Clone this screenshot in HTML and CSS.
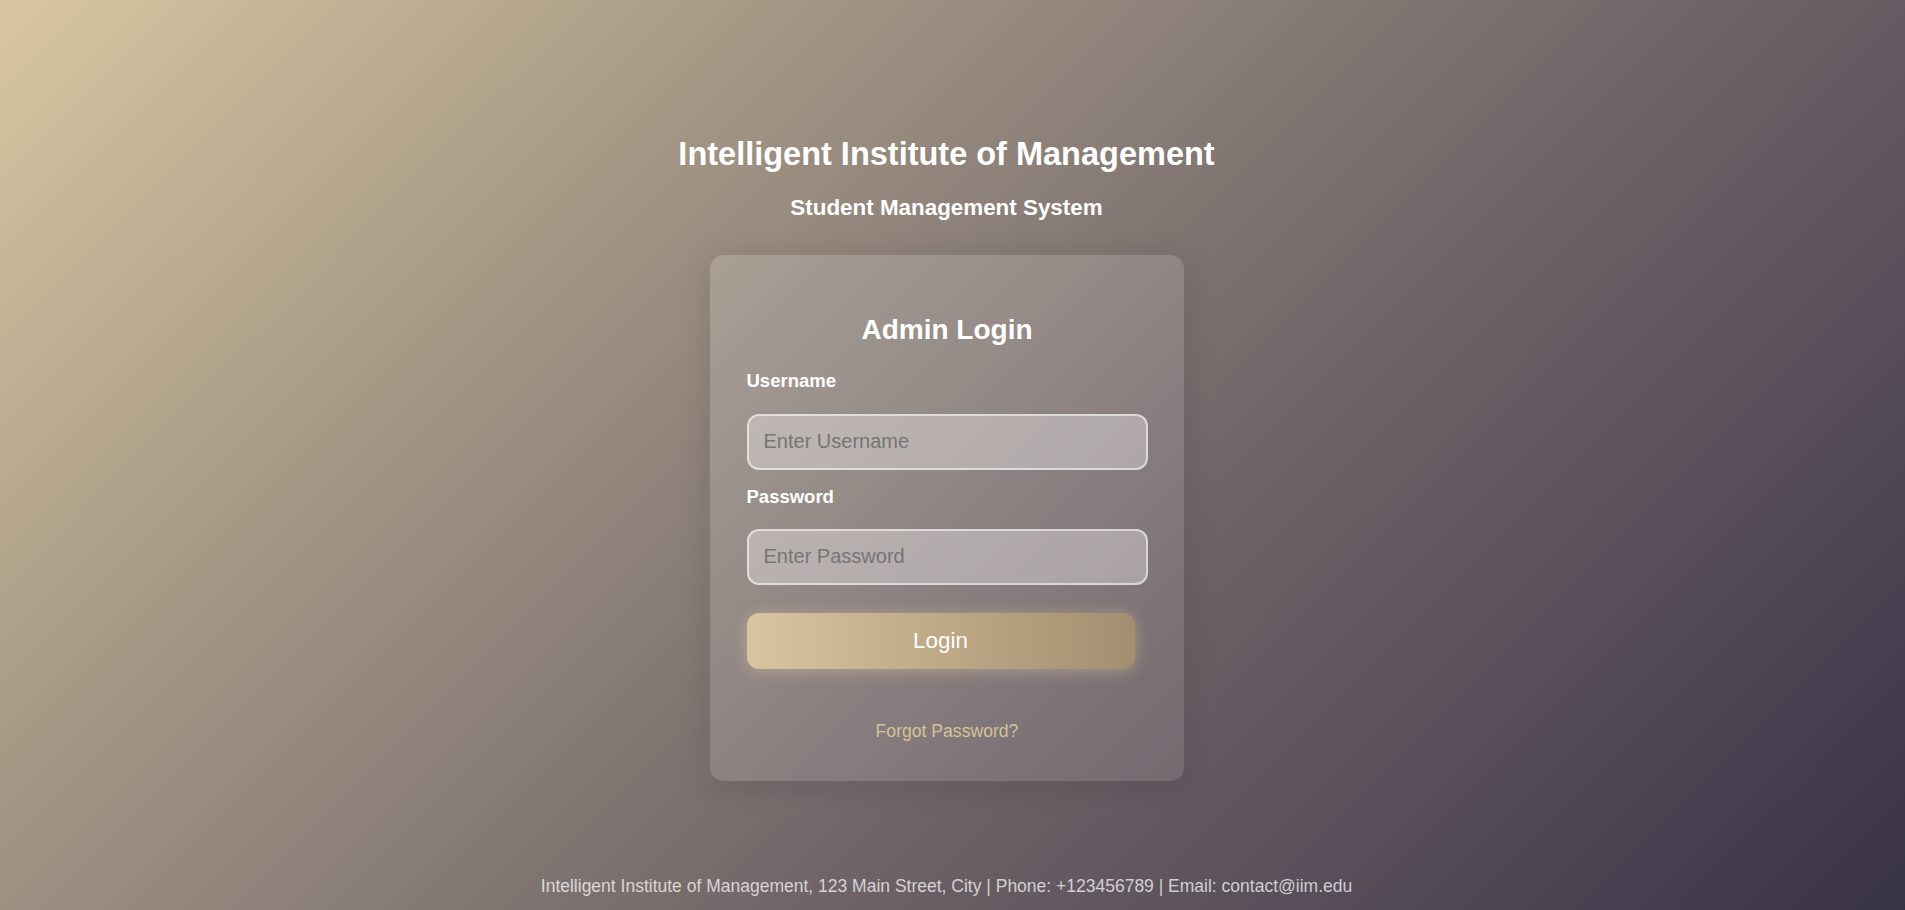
FILE: index.html
```html
<!DOCTYPE html>
<html lang="en">
<head>
<meta charset="utf-8">
<title>Admin Login - Intelligent Institute of Management</title>
<link rel="stylesheet" href="styles.css">
</head>
<body>
  <header class="page-header">
    <h1 class="site-title">Intelligent Institute of Management</h1>
    <h2 class="site-subtitle">Student Management System</h2>
  </header>

  <main class="login-card">
    <h2 class="login-title">Admin Login</h2>
    <form class="login-form">
      <label class="field-label" for="username">Username</label>
      <input class="field-input" id="username" type="text" placeholder="Enter Username">
      <label class="field-label field-label-second" for="password">Password</label>
      <input class="field-input" id="password" type="password" placeholder="Enter Password">
      <button class="login-button" type="button">Login</button>
    </form>
    <a class="forgot-link" href="#">Forgot Password?</a>
  </main>

  <footer class="page-footer">
    Intelligent Institute of Management, 123 Main Street, City | Phone: +123456789 | Email: contact@iim.edu
  </footer>
</body>
</html>
```

FILE: styles.css
```css
* {
  box-sizing: border-box;
}

html, body {
  height: 100%;
}

body {
  margin: 0;
  min-height: 100vh;
  display: flex;
  flex-direction: column;
  align-items: center;
  padding: 136px 12px 0 0;
  font-family: "Liberation Sans", Arial, sans-serif;
  color: #ffffff;
  background: linear-gradient(135deg, #d9c7a1 0%, #a89a86 26%, #8d817a 42%, #6e6266 62%, #554c58 80%, #383246 100%);
  overflow: hidden;
}

.page-header {
  display: flex;
  flex-direction: column;
  align-items: center;
}

.site-title {
  margin: 0 0 22px;
  font-size: 32.5px;
  font-weight: bold;
  line-height: 37px;
  color: #ffffff;
}

.site-subtitle {
  margin: 0 0 34px;
  font-size: 22.4px;
  font-weight: bold;
  line-height: 25.8px;
  color: #ffffff;
}

.login-card {
  width: 474px;
  padding: 59px 36px 40px 37px;
  border-radius: 14px;
  background: linear-gradient(135deg, rgba(255, 255, 255, 0.16), rgba(255, 255, 255, 0.1));
  box-shadow: 0 4px 30px rgba(0, 0, 0, 0.14), 0 0 12px rgba(255, 255, 255, 0.06);
  display: flex;
  flex-direction: column;
  align-items: stretch;
}

.login-title {
  margin: 0 0 24px;
  text-align: center;
  font-size: 28px;
  line-height: 32.2px;
  font-weight: bold;
  color: #ffffff;
}

.login-form {
  display: flex;
  flex-direction: column;
  align-items: flex-start;
}

.field-label {
  display: block;
  font-size: 18.5px;
  line-height: 21.3px;
  font-weight: bold;
  color: #ffffff;
  margin-bottom: 22.5px;
}

.field-label-second {
  margin-top: 16px;
  margin-bottom: 21.7px;
}

.field-input {
  width: 401px;
  height: 56px;
  padding: 0 15px;
  border: 2px solid rgba(255, 255, 255, 0.55);
  border-radius: 12px;
  background: rgba(255, 255, 255, 0.33);
  font-family: "Liberation Sans", Arial, sans-serif;
  font-size: 20px;
  color: #333333;
  outline: none;
}

.field-input::placeholder {
  color: #757575;
}

.login-button {
  margin-top: 28.7px;
  width: 388px;
  height: 56px;
  border: none;
  border-radius: 12px;
  background: linear-gradient(90deg, #d8c59f 0%, #c1ab89 45%, #a38e6f 100%);
  box-shadow: 0 2px 16px rgba(222, 202, 160, 0.45);
  font-family: "Liberation Sans", Arial, sans-serif;
  font-size: 22.4px;
  color: #ffffff;
  cursor: pointer;
}

.forgot-link {
  margin-top: 53px;
  align-self: center;
  font-size: 17.6px;
  line-height: 19px;
  color: #d6c298;
  text-decoration: none;
}

.page-footer {
  margin-top: auto;
  padding-bottom: 14px;
  font-size: 17.5px;
  line-height: 20px;
  color: rgba(255, 255, 255, 0.72);
  text-align: center;
}
```
